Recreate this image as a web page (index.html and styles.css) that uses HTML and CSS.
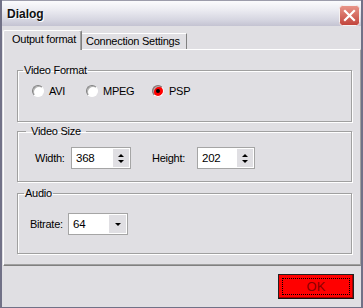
FILE: index.html
```html
<!DOCTYPE html>
<html lang="en">
<head>
  <meta charset="UTF-8">
  <title>Dialog</title>
  <link rel="stylesheet" href="styles.css">
</head>
<body>

<div class="window">
  <!-- barra de titulo -->
  <div class="titlebar">
    <span class="title">Dialog</span>
    <span class="close">
      <svg width="21" height="21" viewBox="0 0 21 21">
        <rect x="0.5" y="0.5" width="20" height="20" rx="3" fill="url(#red)" stroke="#f4f1f1"/>
        <defs>
          <linearGradient id="red" x1="0" y1="0" x2="0" y2="1">
            <stop offset="0" stop-color="#e9968a"/>
            <stop offset="1" stop-color="#c1433a"/>
          </linearGradient>
        </defs>
        <path d="M6 6 L15 15 M15 6 L6 15" stroke="#fff" stroke-width="2.2" stroke-linecap="square"/>
      </svg>
    </span>
  </div>

  <div class="tabs">
    <div class="tab tab-active">Output format</div>
    <div class="tab">Connection Settings</div>
  </div>

  <div class="pane">
    <fieldset class="group group-format">
      <legend>Video Format</legend>
      <div class="group-body">
        <label class="radio radio-avi"><span class="dot"></span>AVI</label>
        <label class="radio radio-mpeg"><span class="dot"></span>MPEG</label>
        <label class="radio"><span class="dot dot-on"></span>PSP</label>
      </div>
    </fieldset>

    <fieldset class="group group-size">
      <legend>Video Size</legend>
      <div class="group-body">
        <span class="lbl lbl-width">Width:</span>
        <div class="spin"><span class="spin-val">368</span><span class="spin-btns"><i class="up"></i><i class="down"></i></span></div>
        <span class="lbl lbl-height">Height:</span>
        <div class="spin"><span class="spin-val">202</span><span class="spin-btns"><i class="up"></i><i class="down"></i></span></div>
      </div>
    </fieldset>

    <fieldset class="group group-audio">
      <legend>Audio</legend>
      <div class="group-body">
        <span class="lbl lbl-bitrate">Bitrate:</span>
        <div class="combo"><span class="spin-val">64</span><span class="combo-btn"><i class="down"></i></span></div>
      </div>
    </fieldset>
  </div>

  <div class="footer">
    <button class="ok"><span>OK</span></button>
  </div>
</div>

</body>
</html>
```

FILE: styles.css
```css
body {
  margin: 0;
  background: #e0dfe3;
  font-family: 'Liberation Sans', Arial, sans-serif;
  font-size: 11px;
  letter-spacing: -0.25px;
  color: #000;
}

/* moldura da janela */
.window {
  width: 363px;
  height: 308px;
  box-sizing: border-box;
  border: solid #717187;
  border-width: 0 2px 1px 2px;
  display: flex;
  flex-direction: column;
}

.titlebar {
  height: 26px;
  box-sizing: border-box;
  border-top: 1px solid #9c9cab;
  background: linear-gradient(#fbfbfd 0%, #ececf2 35%, #d6d6e1 75%, #c4c3d2 100%);
  display: flex;
  align-items: center;
  justify-content: space-between;
  padding: 0 1px 0 5px;
}

.title {
  font-size: 12px;
  font-weight: bold;
  letter-spacing: 0;
  color: #111;
  text-shadow: 1px 1px 0 #fff;
}

.close {
  display: flex;
  margin-top: 4px;
}

/* abas */
.tabs {
  display: flex;
  align-items: flex-end;
  padding: 4px 0 0 1px;
}

.tab {
  height: 16px;
  box-sizing: border-box;
  width: 105px;
  padding: 1px 0 0 4px;
  border-top: 1px solid #fff;
  border-right: 1px solid #808080;
  line-height: 13px;
  white-space: nowrap;
}

.tab-active {
  position: relative;
  z-index: 1;
  width: 79px;
  height: 20px;
  margin-bottom: -1px;
  padding: 2px 0 0 8px;
  background: #e0dfe3;
  border-left: 1px solid #fff;
  border-radius: 2px 2px 0 0;
  box-shadow: inset -1px 0 0 #a0a0a0;
}

.pane {
  height: 217px;
  box-sizing: border-box;
  margin-left: 1px;
  padding: 14px 8px 0 13px;
  border: 1px solid;
  border-color: #fff #a0a0a0 #808080 #fff;
  box-shadow: inset 0 -1px 0 #a0a0a0;
}

/* grupos */
.group {
  margin: 0;
  padding: 0;
  min-inline-size: 0;
  border: 1px solid #a0a0a0;
  box-shadow: inset 1px 1px 0 #fff, 1px 1px 0 #fff;
}

.group legend {
  line-height: 13px;
  padding: 0 1px;
  margin-left: 5px;
}

.group-body {
  box-sizing: border-box;
  display: flex;
  align-items: center;
}

.group-format .group-body {
  height: 44px;
  padding: 0 0 17px 14px;
}

.group-size {
  margin-top: 3px;
}

.group-size legend {
  margin-left: 8px;
  padding: 0 5px;
}

.group-size .group-body {
  height: 43px;
  align-items: flex-start;
  padding: 9px 0 0 17px;
}

.group-audio {
  margin-top: 5px;
}

.group-audio legend {
  margin-left: 6px;
}

.group-audio .group-body {
  height: 53px;
  align-items: flex-start;
  padding: 13px 0 0 12px;
}

/* radios */
.radio {
  display: flex;
  align-items: center;
}

.radio-avi {
  width: 54px;
}

.radio-mpeg {
  width: 66px;
}

.dot {
  width: 12px;
  height: 12px;
  box-sizing: border-box;
  border-radius: 50%;
  border: 1px solid;
  border-color: #808080 #fff #fff #808080;
  background: #fff;
  box-shadow: inset 1px 1px 0 #b0b0b0;
  margin-right: 5px;
  display: flex;
  align-items: center;
  justify-content: center;
}

.dot-on {
  background: #f00;
}

.dot-on::after {
  content: "";
  width: 4px;
  height: 4px;
  border-radius: 50%;
  background: #000;
}

/* campos */
.lbl {
  line-height: 22px;
}

.lbl-width {
  width: 36px;
}

.lbl-height {
  width: 45px;
  margin-left: 21px;
}

.lbl-bitrate {
  width: 38px;
}

.spin, .combo {
  height: 22px;
  width: 60px;
  box-sizing: border-box;
  border: 1px solid #a5a5a5;
  background: #fff;
  display: flex;
  justify-content: space-between;
  padding: 1px;
}

.spin + .lbl-height + .spin {
  width: 58px;
}

.spin-val {
  padding-left: 3px;
  line-height: 18px;
  font-size: 11.5px;
}

.spin-btns, .combo-btn {
  width: 16px;
  background: #e0dfe3;
  display: flex;
  flex-direction: column;
  align-items: center;
  justify-content: center;
  gap: 3px;
}

.combo-btn {
  width: 17px;
}

.up, .down {
  width: 0;
  height: 0;
  border-left: 3px solid transparent;
  border-right: 3px solid transparent;
}

.up {
  border-bottom: 3px solid #000;
}

.down {
  border-top: 3px solid #000;
}

/* rodape */
.footer {
  flex: 1;
  display: flex;
  justify-content: flex-end;
  align-items: flex-start;
  padding: 8px 7px 0 0;
}

.ok {
  width: 76px;
  height: 25px;
  padding: 3px;
  margin: 0;
  background: #f00;
  border: 1px solid;
  border-color: #222 #222 #111 #222;
  box-shadow: inset -1px -1px 0 #a00000;
  font-family: 'Liberation Sans Narrow', 'Liberation Sans', sans-serif;
  font-size: 13px;
  letter-spacing: 0;
  color: #8a0000;
  cursor: pointer;
}

.ok span {
  display: block;
  height: 100%;
  box-sizing: border-box;
  border: 1px dotted #000;
  line-height: 15px;
}
```
